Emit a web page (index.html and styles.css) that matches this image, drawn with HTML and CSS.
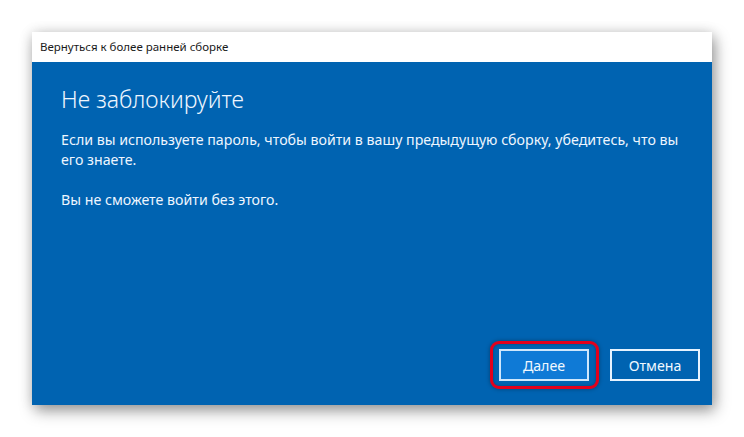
FILE: index.html
```html
<!DOCTYPE html>
<html lang="ru">
<head>
<meta charset="utf-8">
<link rel="stylesheet" href="styles.css">
</head>
<body>
<div class="window">
  <div class="titlebar">Вернуться к более ранней сборке</div>
  <div class="panel">
    <h1 class="heading">Не заблокируйте</h1>
    <p class="text">Если вы используете пароль, чтобы войти в вашу предыдущую сборку, убедитесь, что вы его знаете.</p>
    <p class="text">Вы не сможете войти без этого.</p>
    <div class="actions">
      <div class="highlight-wrap">
        <button class="btn btn-primary">Далее</button>
        <span class="highlight"></span>
      </div>
      <button class="btn">Отмена</button>
    </div>
  </div>
</div>
</body>
</html>
```

FILE: styles.css
```css
html, body {
  margin: 0;
  padding: 0;
  background: #ffffff;
}
body {
  width: 744px;
  height: 437px;
  padding: 32px;
  box-sizing: border-box;
  font-family: "Noto Sans", "Open Sans", sans-serif;
}
.window {
  width: 680px;
  height: 373px;
  display: flex;
  flex-direction: column;
  box-shadow: 3px 6px 14px rgba(0, 0, 0, 0.38), 0 0 12px rgba(0,0,0,0.12);
}
.titlebar {
  height: 30px;
  background: #ffffff;
  color: #1a1a1a;
  font-size: 11.5px;
  line-height: 30px;
  padding-left: 8px;
  flex: none;
}
.panel {
  flex: 1;
  background: #0063b1;
  color: #eef6ff;
  padding: 21px 12px 24px 29px;
  display: flex;
  flex-direction: column;
}
.heading {
  margin: 0 0 15px 0;
  font-weight: 300;
  font-size: 23px;
  line-height: 32px;
  color: #eef6ff;
}
.text {
  margin: 0 0 20px 0;
  font-size: 14.2px;
  line-height: 20px;
}
.actions {
  margin-top: auto;
  display: flex;
  justify-content: flex-end;
  gap: 21px;
}
.highlight-wrap {
  position: relative;
  display: flex;
}
.btn {
  width: 90px;
  height: 32px;
  box-sizing: border-box;
  border: 2px solid #e6f3ff;
  background: #0063b1;
  color: #f0f8ff;
  font-family: "Noto Sans", "Open Sans", sans-serif;
  font-size: 14.2px;
  padding: 0;
  margin: 0;
}
.btn-primary {
  background: #0f7ad6;
  border-color: #cfe7fc;
}
.highlight {
  position: absolute;
  left: -9px;
  top: -8px;
  right: -10px;
  bottom: -8px;
  border: 3.5px solid #e3001b;
  border-radius: 9px;
  box-shadow: 0 0 4px rgba(0, 0, 0, 0.35), inset 0 0 3px rgba(0,0,0,0.3);
}
```
